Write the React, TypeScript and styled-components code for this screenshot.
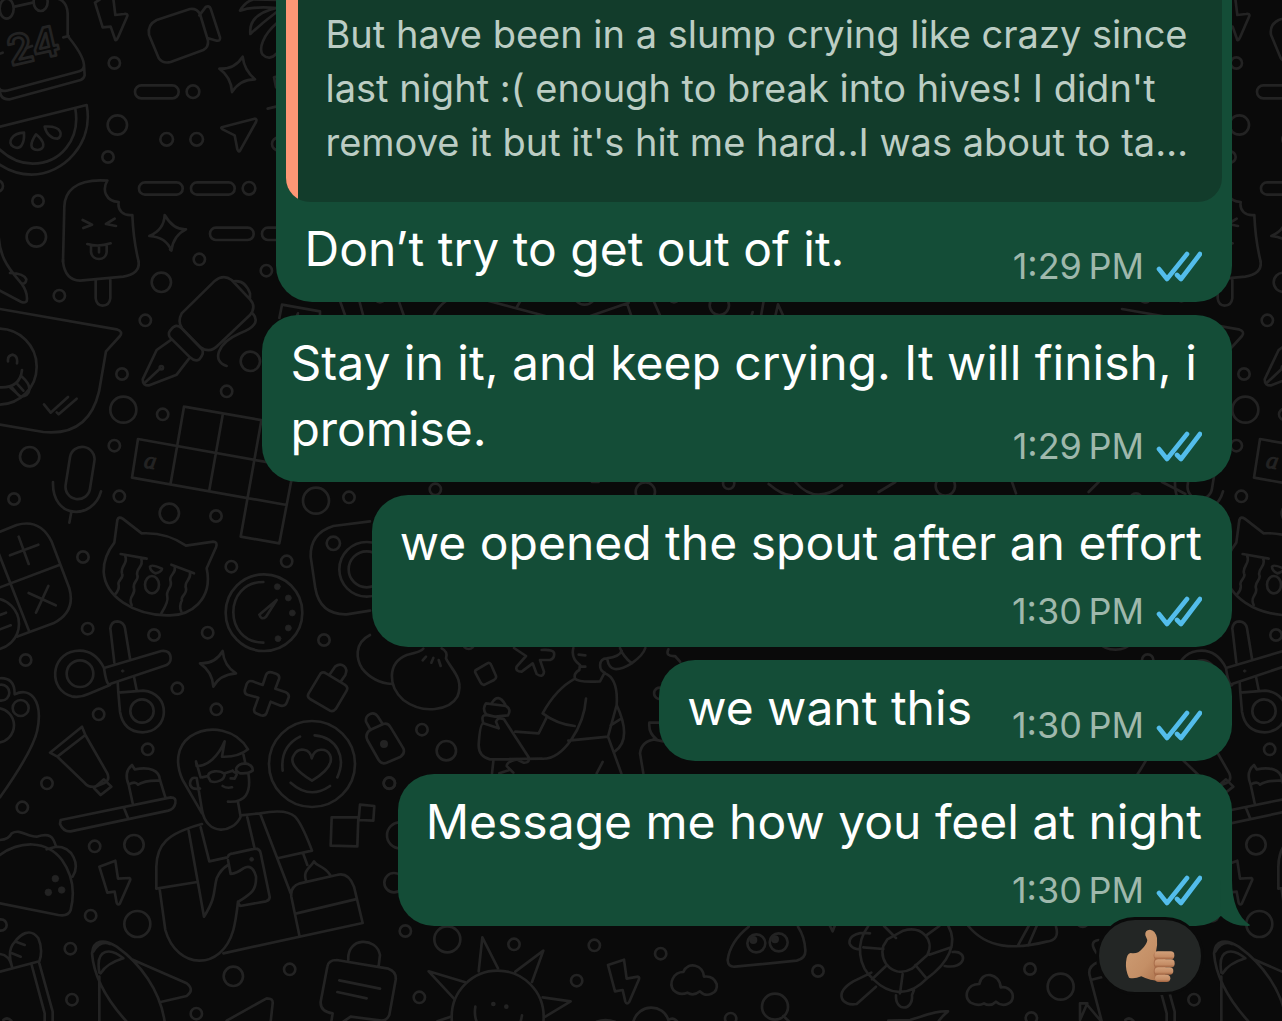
import React from 'react';
import styled, { createGlobalStyle } from 'styled-components';

const GlobalStyle = createGlobalStyle`
  * { box-sizing: border-box; }
  body {
    margin: 0;
    background: #0a0a0a;
    font-family: Inter, "Liberation Sans", sans-serif;
  }
`;

const Screen = styled.main`
  position: relative;
  height: 100vh;
  overflow: hidden;
  background: #0a0a0a;
`;

const Backdrop = styled.svg`
  position: absolute;
  top: 0;
  left: 0;
  width: 100%;
  height: 100%;
  fill: none;
  stroke: #232323;
  stroke-width: 8;
  stroke-linecap: round;
  stroke-linejoin: round;
`;

const Thread = styled.section`
  position: relative;
  display: flex;
  flex-direction: column;
  align-items: flex-end;
  justify-content: flex-end;
  gap: 13px;
  height: 100%;
  padding: 0 50px 95px 20px;
`;

const Bubble = styled.article<{ $quoted?: boolean }>`
  position: relative;
  flex: none;
  max-width: 80%;
  padding: ${p => (p.$quoted ? '10px 10px 0' : '0')};
  border-radius: 36px;
  background: #144d37;
  color: #fff;
`;

const Quote = styled.blockquote`
  margin: 0;
  padding: 50px 34px 33px 39px;
  border-radius: 24px;
  background: linear-gradient(to right, #fc9775 12px, #123c2b 12px);
  color: #bccdc4;
  font-size: 38px;
  line-height: 54px;
`;

const QuoteLine = styled.span`
  display: block;
`;

type Placement = 'beside' | 'below' | 'wrapped';

const bodyDisplay = { beside: 'flex', below: 'block', wrapped: 'flow-root' };

const Body = styled.div<{ $placement: Placement; $quoted?: boolean }>`
  display: ${p => bodyDisplay[p.$placement]};
  align-items: flex-end;
  justify-content: space-between;
  column-gap: 40px;
  padding: ${p => (p.$quoted ? '14px 20px 10px 18px' : '15px 30px 10px 28px')};
  font-size: 48px;
  line-height: 66px;
`;

const Text = styled.p<{ $placement: Placement }>`
  display: ${p => (p.$placement === 'wrapped' ? 'inline' : 'block')};
  margin: 0;
  padding-bottom: ${p => (p.$placement === 'wrapped' ? '0' : '10px')};
`;

const Meta = styled.footer<{ $placement: Placement }>`
  display: flex;
  float: ${p => (p.$placement === 'wrapped' ? 'right' : 'none')};
  align-items: center;
  justify-content: flex-end;
  gap: 12px;
  height: 51px;
  margin-top: ${p => (p.$placement === 'wrapped' ? '25px' : '0')};
  color: #9fb8ac;
  font-size: 36px;
  line-height: 51px;
  white-space: nowrap;
`;

const Ticks = styled.svg`
  width: 46px;
  height: 32px;
  fill: none;
  stroke: #53bdeb;
  stroke-width: 4.6;
  stroke-linecap: round;
  stroke-linejoin: round;
`;

const Tail = styled.svg`
  position: absolute;
  right: -18px;
  bottom: 0;
  width: 30px;
  height: 46px;
  fill: #144d37;
`;

const Reaction = styled.button`
  position: absolute;
  right: 28px;
  bottom: -69px;
  display: flex;
  align-items: center;
  justify-content: center;
  width: 108px;
  height: 78px;
  padding: 0;
  border: 3px solid #0a0a0a;
  border-radius: 39px;
  background: #232625;
`;

const Thumb = styled.svg`
  width: 52px;
  height: 55px;
`;

type Spot = [number, number, number];
const S = 17, M = 29, L = 39;

function Dots({ items }: { items: Spot[] }) {
  return <>{items.map(([cx, cy, r], i) => <circle key={i} cx={cx} cy={cy} r={r} />)}</>;
}

function Part({ x, y, children }: { x: number; y: number; children: React.ReactNode }) {
  return <g transform={`translate(${x} ${y}) scale(.33333)`}>{children}</g>;
}

function Doodles() {
  return (
    <g id="doodles">
      <Part x={0} y={0}>
        <ellipse cx="20" cy="26" rx="21" ry="30" />
        <ellipse cx="122" cy="6" rx="21" ry="27" />
        <path d="M44 20L98 8M145-5Q200-12 203 40V108Q250 165 252 195Q252 210 238 214L20 272Q0 276-4 262M252 196L254 226Q252 236 242 240L30 298Q5 300 0 278M78 145L96 138M-4 162L8 158M190 112L206 108" />
        <text x="32" y="198" transform="rotate(-13 32 198)" fontSize="124" fontWeight="600" strokeWidth="8" fontFamily="Inter">24</text>
        <path d="M285 8L308 82L332 80L346 120Q350 122 356 108L382 48Q384 40 372 42L346 45L340-4M285 8L300-2" />
        <path d="M470 60L570 27Q590 24 600 42L624 122Q626 142 610 150L512 186Q488 192 476 174L447 104Q442 74 470 60ZM598 46L618 20Q628 16 632 26L660 112Q662 124 650 122L622 114" />
        <path d="M728 170Q732 210 765 238Q720 238 696 276Q694 232 658 206Q704 208 728 170Z" />
        <path d="M830 0L762-2Q735 5 720 32Q760 18 830 24M830 24Q745 42 751 102Q785 70 830 36M830 70C790 105 775 145 788 164Q808 184 830 160M830 230L822 232L828 262M803 326L828 320" />
        <rect x="405" y="256" width="131" height="39" rx="19" />
        <path d="M0 380L260 315C282 430 190 524 95 524Q40 524-10 488M226 326C242 420 180 491 98 491Q40 491-10 440" />
        <path d="M72 398C35 400 20 428 40 440C62 452 74 430 72 398ZM108 403C90 430 88 448 112 450C138 448 135 425 108 403ZM134 380C140 405 156 416 172 416C190 410 188 376 134 380Z" />
        <path d="M665 382L764 356Q772 356 768 366L720 452Q716 458 712 448L704 406L668 388Q662 384 665 382Z" />
        <rect x="417" y="547" width="131" height="37" rx="18" />
        <rect x="573" y="547" width="131" height="37" rx="18" />
        <rect x="630" y="683" width="131" height="37" rx="18" />
        <rect x="786" y="683" width="131" height="37" rx="18" />
        <path d="M322 542C220 535 194 580 193 620L189 785M322 542C305 570 318 604 356 606C352 632 370 648 397 645Q400 720 416 785" />
        <path d="M248 660L276 674L250 684M344 656L318 672L348 678M262 732Q295 742 332 730M273 738V756C276 784 318 784 320 756V738M297 740V757" />
        <path d="M494 645Q520 690 558 688Q520 706 514 752Q500 712 448 708Q492 690 494 645Z" />
        <Dots items={[[343, 189, S], [579, 275, 19], [352, 375, M], [500, 418, 19], [590, 418, 19], [835, 432, 19], [324, 471, S], [-8, 558, S], [114, 603, S], [747, 565, 19], [109, 711, M]]} />
      </Part>
      <Part x={0} y={250}>
        <path d="M189 30V35Q195 90 240 92L370 80Q420 72 416 35M287 92V145Q290 166 308 167Q328 166 331 145V90" />
        <path d="M-4-75C-10 20 30 60 64 100Q85 130 80 154Q76 160 64 156L0 122M30 69Q72 70 79 88Q78 102 66 101" />
        <path d="M0 177L350 238Q370 244 360 258L318 304L297 425Q265 560 130 546L0 524" />
        <circle cx="-4" cy="350" r="114" />
        <path d="M24 334Q22 316 39 314Q54 318 51 340M-4 412Q60 416 66 360M66 380C100 410 92 438 62 440L30 412M48 398L70 422M34 410L55 435" />
        <path d="M132 463L152 488L204 441M170 487L176 493L230 446" />
        <path d="M645 92Q670 72 695 90L750 148Q770 170 750 195L655 285Q630 312 602 292L546 235Q532 215 545 190ZM700 94Q735 88 750 130V144M758 190C780 215 760 235 720 250C650 280 635 335 680 348" />
        <path d="M512 240Q528 218 545 235L606 298Q614 310 598 328Q585 336 570 322L510 262Q502 250 512 240ZM515 268L470 300L428 388Q428 408 448 406L530 374L567 326M437 396L478 358" />
        <circle cx="484" cy="353" r="5" />
        <path d="M552 470L870 525M414 567L810 638M396 683L860 765M552 470L512 700M414 567L396 683M668 495L628 720M784 512L722 860M880 660L838 880M722 860L838 880" />
        <text x="430" y="652" transform="rotate(10 430 652)" fill="#232323" fontSize="72" fontFamily="Liberation Serif" fontStyle="italic" strokeWidth="3">a</text>
        <rect x="203" y="590" width="74" height="158" rx="37" transform="rotate(9 240 669)" />
        <path d="M159 696C155 810 280 810 303 724M214 786L208 818" />
        <path d="M838 204L846 164L960 184V210M890 200L894 190" />
        <Dots items={[[598, 28, S], [799, 62, S], [484, 97, M], [178, 137, S], [436, 211, S], [751, 334, M], [366, 372, S], [680, 424, S], [370, 479, L], [488, 493, S], [343, 587, S], [89, 620, M], [42, 747, S], [358, 739, S], [512, -2, 2]]} />
      </Part>
      <Part x={0} y={500}>
        <path d="M0 95L50 75Q120 55 155 125L208 265Q228 335 160 370L50 410M0 262L178 195M-4 160L86 390" />
        <path d="M56 110L86 192M30 166L115 134M86 279L167 316M145 258L108 338M0 345L18 338M0 388L32 376" />
        <circle cx="-20" cy="372" r="77" />
        <path d="M343 128L352 60Q356 48 368 56L425 100Q500 96 558 137L640 125Q654 126 648 142L620 205C640 300 570 350 500 346C400 344 315 290 311 215Q310 170 343 128Z" />
        <path d="M362 162L440 176M376 170C385 190 360 200 366 220C374 235 350 240 356 255Q358 270 346 282M424 178C432 200 406 205 412 225C418 242 396 245 402 265C408 285 382 290 395 315M514 194L582 220M524 203C530 220 504 225 512 245C518 262 496 270 502 290Q506 305 484 340M570 220C574 240 550 245 558 265C562 282 540 290 546 300Q536 320 544 335M450 200Q454 192 486 206Q484 216 466 220Q450 212 450 200Z" />
        <ellipse cx="456" cy="254" rx="21" ry="26" />
        <circle cx="792" cy="338" r="115" />
        <path d="M790 246C670 246 670 428 790 428M830 300L798 350Q784 362 778 344Z" />
        <g fill="#232323" strokeWidth="2"><Dots items={[[832, 260, 9], [865, 294, 9], [877, 339, 9], [865, 384, 9], [834, 416, 9], [368, 513, 4]]} /></g>
        <path d="M1110 64L1000 78Q930 100 932 170L946 265Q960 345 1040 343L1110 332" />
        <circle cx="1100" cy="208" r="82" />
        <circle cx="1100" cy="208" r="54" />
        <path d="M343 488L331 385Q334 364 352 364Q372 366 375 385L390 476M312 504L484 453Q512 450 512 475Q512 488 500 495L330 552Q320 560 312 504C290 460 260 448 225 453C150 465 145 570 215 589Q240 594 265 582L330 555" />
        <circle cx="240" cy="521" r="40" />
        <path d="M353 546L355 578L430 572C515 580 510 695 428 697Q370 695 360 635L355 578M402 530L410 570" />
        <circle cx="426" cy="633" r="35" />
        <path d="M668 453Q672 498 708 520Q658 524 640 560Q638 516 600 490Q646 492 668 453Z" />
        <path d="M788 555L798 525Q803 514 815 517L830 522Q840 527 837 537L826 566L858 577Q870 584 865 595L860 608Q856 620 842 617L812 605L800 638Q795 650 782 646L768 640Q760 635 763 626L775 593L742 584Q732 580 735 568L740 552Q745 540 758 544Z" />
        <path d="M962 520L926 580Q920 590 930 597L990 632Q1000 636 1008 626L1040 572Q1046 562 1034 554L978 520Q970 514 962 520ZM990 522L1005 500C1025 485 1046 502 1036 525L1022 545" />
        <path d="M1110 405C1060 430 1070 480 1086 505Q1120 548 1176 552" />
        <Dots items={[[4, 578, 24], [62, 624, 24], [-10, 676, 52]]} />
        <path d="M-5 535Q45 530 44 583C90 560 130 600 112 690Q100 750 0 892" />
        <path d="M150 758L246 680L256 705L172 770ZM256 705L322 820Q330 840 315 848L285 860M172 770L255 850Q265 862 285 860M282 864L312 838L334 860L302 885Z" />
        <path d="M606 940L548 840C525 790 530 740 570 710C630 670 710 690 744 748Q715 772 666 770L674 724C655 770 620 800 590 798L588 784L602 832M730 762L736 790Q760 795 758 812Q745 822 720 820Q702 812 712 800Q720 790 736 790M714 816Q704 822 698 812M624 830C624 810 660 810 674 822C674 840 650 850 632 844ZM674 820L698 812M606 832L624 828M600 866Q570 870 570 850Q572 830 590 834L606 930C620 1010 700 1000 722 950L714 906M745 820Q760 910 684 905M692 835L704 836L710 824M668 858Q680 866 696 862" />
        <circle cx="936" cy="792" r="129" />
        <path d="M936 842Q860 795 882 765C895 740 930 745 935 775C945 740 980 745 990 765Q1005 800 936 842ZM900 710Q840 740 848 812M944 706C1010 712 1040 770 1012 832M872 848Q930 900 990 858" />
        <path d="M1110 690L1150 672Q1164 668 1172 682L1210 745Q1216 760 1202 770L1160 788Q1145 794 1136 780L1102 720Q1094 702 1110 690ZM1112 690L1098 665C1095 645 1120 630 1134 650L1148 672" />
        <circle cx="1152" cy="732" r="8" fill="#232323" />
        <Dots items={[[508, 40, M], [648, 48, S], [948, 2, L], [1047, -8, S], [249, 171, S], [1000, 130, 20], [694, 200, S], [860, 184, S], [263, 386, S], [462, 405, S], [623, 398, S], [972, 420, S], [77, 480, S], [532, 565, S], [649, 628, S], [296, 643, S], [443, 748, S]]} />
      </Part>
      <Part x={0} y={750}>
        <path d="M182 210L512 142Q530 142 526 160Q522 178 505 182L212 244Q190 246 180 222ZM372 174L384 204M398 160L386 104C376 80 378 60 396 45L404 58C450 50 478 60 480 90L496 142M386 104Q405 92 414 104Q435 90 480 92" />
        <path d="M-4 270Q25 270 35 250C60 235 80 260 110 260C150 248 160 260 168 290C220 290 240 345 218 380M-5 318C60 270 140 270 186 330C225 385 222 440 212 480Q205 500 175 495L0 460M140 298L168 290" />
        <g fill="#232323" strokeWidth="2"><Dots items={[[166, 386, 10], [145, 427, 10], [185, 420, 10], [755, 328, 6]]} /></g>
        <path d="M298 350L346 332L354 386L388 384Q394 386 388 396L360 460Q354 468 350 458L344 425L322 428Z" />
        <path d="M606 222C500 250 470 285 469 350V416L592 396M479 418L496 540C530 660 665 665 700 540Q708 510 714 455M566 242L612 500C650 440 640 420 650 385Q662 358 684 345M602 232L628 334L682 322M722 196L780 190Q860 175 885 200Q905 220 936 302L836 324M742 202L764 296M780 190L872 430M684 320Q685 312 700 310L765 296Q780 296 782 310L809 440Q810 450 798 454L720 468L714 456C755 430 770 420 768 380Q758 340 730 355Q710 370 692 372L684 330M910 312L922 345M670 610L1088 519L1062 410Q1045 365 1010 375L900 400Q870 410 874 440L898 556M890 490L1066 448M918 392C908 360 930 355 942 334C950 350 970 345 990 374" />
        <path d="M995 202H1075L1072 289L992 287ZM1080 164L1123 168L1120 212L1076 210Z" />
        <path d="M0 665L118 634Q130 600 115 565C90 530 60 555 45 575Q20 600 36 650M0 612Q28 615 36 650M50 576L74 585M36 610L62 620M95 645L134 790V815M118 640L158 785V815M10 810Q22 800 34 812" />
        <path d="M380 815C330 760 282 690 276 610C280 570 310 565 350 590C420 640 480 720 494 815M280 605Q300 570 330 582M298 668C285 590 335 595 370 625Q320 640 302 670ZM298 680V815M400 630L560 700Q585 720 560 738L482 756" />
        <path d="M1045 630C1040 560 1130 560 1140 615L1136 648M1010 630L1165 656Q1190 665 1187 690L1168 795Q1160 812 1145 812L1052 800L1030 815M1010 630Q985 630 982 650L962 755Q960 785 998 790L994 815M1018 691L1140 716M1012 726L1100 745M680 812L800 745Q820 745 818 760L812 815" />
        <Dots items={[[141, 100, S], [67, 172, S], [284, 289, S], [402, 284, M], [272, 497, S], [3, 525, S], [412, 522, L], [211, 596, S], [216, 749, S], [700, 679, M], [869, 658, S], [589, 791, S], [1168, 99, S], [1182, 398, M], [1200, 256, L], [1216, 543, S]]} />
      </Part>
    </g>
  );
}

function Wallpaper() {
  return (
    <Backdrop aria-hidden="true">
      <Doodles />
      <use href="#doodles" x="1122" />
      <Part x={360} y={620}>
        <path d="M190 86Q185 95 140 105C80 130 85 200 130 240C190 285 270 270 292 230C315 175 270 145 258 115Q265 95 245 85M188 121L198 110M214 128L220 114M242 138L236 120" />
        <path d="M348 150L382 130Q390 126 394 136L408 168Q410 176 402 180L374 194Q366 196 362 188L346 158Q344 152 348 150ZM462 84L498 108L470 140Q465 155 485 155L518 130L530 162Q550 175 552 155L540 120H570Q585 115 582 98Q578 88 545 90" />
        <path d="M640 84Q632 115 660 135L658 150Q640 160 645 176C600 200 570 240 548 280Q590 312 644 318M645 176Q655 188 720 184L734 158C715 150 715 115 740 115Q780 110 785 92M734 160Q775 175 770 255L744 350L625 362M678 236C672 320 610 420 545 416L390 418Q356 410 356 375Q360 310 370 310L416 325M560 292L536 340L466 335M780 84Q790 110 815 130M742 118Q750 170 815 130Q850 105 856 84M770 255C800 320 800 370 764 395M752 316L780 298M744 350L784 460M416 325L408 305Q414 290 432 298L506 412Q510 430 490 428L470 418Q440 425 440 438L460 458M400 424L396 460M370 310Q362 285 378 285L405 290M378 250L438 258Q455 268 444 286L405 290L378 283Q366 265 378 250ZM396 248Q415 218 436 254M728 426L710 460M656 104L676 106M664 140L676 140M418 460L448 450" />
        <path d="M868 308H900M868 308Q865 340 890 358Q845 360 840 400L850 460M880 358L910 364M925 88Q915 110 945 108L960 125M905 204A17 17 0 1 0 905 236" />
        <Dots items={[[186, 329, S], [259, 392, M], [88, 490, S], [326, 70, S]]} />
      </Part>
      <Part x={262} y={296}>
        <path d="M234 15L250 60M292 15L304 60M410 15L426 60M514 60Q528 32 552 15M680 15L850 60M775 15L763 36M985 60L1100 20M1095 22L1108 60M1175 15L1195 60M1505 15L1497 60M1540 60L1548 25L1564 60M1468 60L1472 48" />
        <Dots items={[[354, 2, S], [968, -8, 34], [1236, 2, S], [1372, 28, M]]} />
      </Part>
      <Part x={400} y={900}>
        <circle cx="293" cy="350" r="138" />
        <path d="M236 214L247 112L294 205M346 215L430 152L396 246M162 296L86 214L196 247M428 292L512 304L436 350M152 350L112 364M226 320Q222 345 230 365M366 346L362 365" />
        <path d="M624 195L672 179L680 236L714 230Q720 232 716 240L688 305Q680 316 676 305L668 270L645 274ZM850 216C820 216 806 250 820 270Q838 288 862 278Q880 290 900 274C920 295 955 280 950 252Q940 226 912 230C910 195 865 182 850 216Z" />
        <path d="M1046 80Q990 125 983 180Q984 202 1005 200L1190 182Q1218 175 1216 150Q1214 110 1194 80M700 365C715 310 790 310 805 360Q820 350 832 365M590 365Q615 355 645 365M1150 348L1168 365M1290 78L1298 94L1304 78" />
        <Dots items={[[142, 118, L], [342, 133, S], [583, 136, S], [782, 161, S], [530, 242, S], [58, 292, S], [1069, 130, 27], [1136, 127, 27], [1125, 320, L], [992, 356, S], [1254, 213, S]]} />
        <g fill="#232323"><Dots items={[[280, 312, 3], [319, 320, 3], [1060, 120, 8], [1125, 118, 8]]} /></g>
      </Part>
      <Part x={820} y={860}>
        <path d="M145 198C105 250 115 320 160 358C205 402 265 415 320 356C385 310 415 250 385 198M202 238L250 212C305 195 345 240 322 285L276 326C225 355 175 310 190 258ZM192 198L228 234M358 198L322 224M130 262L190 267M394 262L328 284M156 358L198 318M320 356L286 315M240 400L248 342M150 220C80 210 70 265 118 268M398 276C445 270 440 330 374 318M154 338L100 364C40 400 65 440 110 432L168 380M228 406C225 455 280 455 276 405L282 390" />
        <path d="M445 198C500 265 580 270 680 245Q720 240 708 200M650 198L625 256M626 198L594 256M478 372C440 372 430 410 452 428Q475 440 492 430Q510 442 528 425C550 445 585 430 577 400Q565 378 542 382C540 340 485 330 478 372ZM205 482L270 480C320 465 350 452 384 454Q370 465 356 483M835 240Q805 245 830 280M835 306Q800 320 810 350L845 483M812 360L850 350M780 430L802 430L780 480ZM802 435L840 480" />
        <Dots items={[[630, 327, S], [722, 380, L], [634, 474, S], [788, 184, S]]} />
      </Part>
      <Part x={262} y={482}>
        <path d="M990 0H1010M1600 0Q1660 70 1740 10M1520 6Q1560 40 1590 40M1850 30L1900 0M2250 0L2262 34M2480 30L2510 0M2700 0Q2740 20 2770 36" />
        <Dots items={[[520, 22, S], [1150, 30, M], [1400, 4, S], [2050, 12, M]]} />
      </Part>
    </Backdrop>
  );
}

function ThumbsUp() {
  return (
    <Thumb viewBox="130 235 156 165" aria-hidden="true">
      <defs>
        <linearGradient id="palm" x1="0" x2="1" y1="0" y2="1">
          <stop offset="0" stopColor="#d0a077" />
          <stop offset=".6" stopColor="#c48f66" />
          <stop offset="1" stopColor="#a86d48" />
        </linearGradient>
        <linearGradient id="finger" x1="0" x2="0" y1="0" y2="1">
          <stop offset="0" stopColor="#d2a07a" />
          <stop offset=".65" stopColor="#c48c65" />
          <stop offset="1" stopColor="#a0623f" />
        </linearGradient>
      </defs>
      <path fill="url(#palm)" d="M194 254Q192 238 208 237Q224 238 229 262Q231 285 226 303L254 304V390Q215 394 182 377Q160 386 145 381Q134 360 136 335Q138 308 150 307Q172 311 184 295Q199 280 200 268Z" />
      <path fill="#a86c49" d="M224 304Q215 312 222 325Q216 338 222 350Q216 362 222 374Q220 386 228 392H248V304Z" />
      <g fill="url(#finger)">
        <rect x="221" y="302" width="60" height="24" rx="11" />
        <rect x="222" y="326" width="60" height="24" rx="11" />
        <rect x="222" y="350" width="56" height="22" rx="11" />
        <rect x="223" y="372" width="46" height="22" rx="11" />
      </g>
    </Thumb>
  );
}

interface Message {
  text: string;
  time: string;
  placement: Placement;
  quote?: string[];
  reacted?: boolean;
}

const messages: Message[] = [
  {
    text: 'Don’t try to get out of it.',
    time: '1:29',
    placement: 'beside',
    quote: [
      'But have been in a slump crying like crazy since',
      "last night :( enough to break into hives! I didn't",
      "remove it but it's hit me hard..I was about to ta…",
    ],
  },
  { text: 'Stay in it, and keep crying. It will finish, i promise.', time: '1:29', placement: 'wrapped' },
  { text: 'we opened the spout after an effort', time: '1:30', placement: 'below' },
  { text: 'we want this', time: '1:30', placement: 'beside' },
  { text: 'Message me how you feel at night', time: '1:30', placement: 'below', reacted: true },
];

function ChatMessage({ text, time, placement, quote, reacted }: Message) {
  return (
    <Bubble $quoted={!!quote}>
      {quote && <Quote>{quote.map(line => <QuoteLine key={line}>{line}</QuoteLine>)}</Quote>}
      <Body $placement={placement} $quoted={!!quote}>
        <Text $placement={placement}>{text}</Text>
        <Meta $placement={placement}>
          <time>{time}{'\u202f'}PM</time>
          <Ticks viewBox="0 0 46 32" role="img" aria-label="Read">
            <path d="M3 18L11 28L31 3M21 24L25 28L44 3" />
          </Ticks>
        </Meta>
      </Body>
      {reacted && (
        <>
          <Tail viewBox="0 0 30 46" aria-hidden="true">
            <path d="M12 0C12 22 18 37 30 45Q30 46 28 46C18 46 8 43 1 36L0 0Z" />
          </Tail>
          <Reaction type="button" aria-label="Thumbs up reaction"><ThumbsUp /></Reaction>
        </>
      )}
    </Bubble>
  );
}

export default function App() {
  return (
    <>
      <GlobalStyle />
      <Screen>
        <Wallpaper />
        <Thread aria-label="Conversation">
          {messages.map(message => <ChatMessage key={message.text} {...message} />)}
        </Thread>
      </Screen>
    </>
  );
}
